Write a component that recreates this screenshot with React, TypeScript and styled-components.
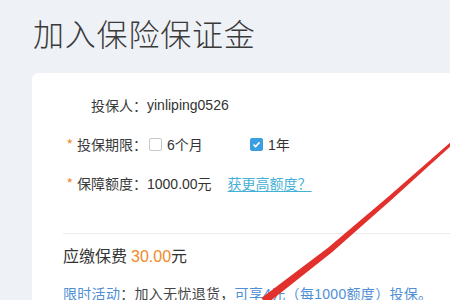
import styled, { createGlobalStyle } from "styled-components";

const GlobalStyle = createGlobalStyle`
  html, body {
    margin: 0;
    padding: 0;
    background: #eef1f5;
    font-family: "Liberation Sans", "Noto Sans CJK SC", sans-serif;
    color: #333;
    overflow: hidden;
  }
`;

const Page = styled.div`
  position: relative;
  width: 450px;
  height: 300px;
  overflow: hidden;
`;

const Title = styled.h1`
  margin: 0;
  padding: 13px 0 0 33px;
  height: 60px;
  font-family: "Noto Sans CJK SC", sans-serif;
  font-weight: 300;
  font-size: 31px;
  line-height: 40px;
  color: #3a3a3a;
  letter-spacing: 0.8px;
`;

const Card = styled.div`
  margin-left: 32px;
  background: #fff;
  border-radius: 6px 0 0 0;
  padding: 20px 0 0 31px;
  height: 300px;
`;

const Form = styled.div`
  display: flex;
  flex-direction: column;
  gap: 15px;
  padding-bottom: 38px;
  border-bottom: 1px solid #ececec;
`;

const Row = styled.div`
  display: flex;
  align-items: center;
  height: 24px;
  font-size: 14px;
`;

const Label = styled.div`
  width: 84px;
  text-align: right;
  font-family: "Noto Sans CJK SC", sans-serif;
  color: #3a3a3a;
  white-space: nowrap;
`;

const Star = styled.span`
  color: #f08a2a;
  margin-right: 4px;
`;

const Value = styled.div`
  display: flex;
  align-items: center;
  color: #333;
  white-space: nowrap;
`;

const Option = styled.label<{ $width?: number }>`
  display: flex;
  align-items: center;
  gap: 5px;
  width: ${(p) => (p.$width ? `${p.$width}px` : "auto")};
  margin-left: 2px;
`;

const Box = styled.span<{ $checked?: boolean }>`
  width: 11px;
  height: 11px;
  border-radius: 2px;
  border: 1px solid ${(p) => (p.$checked ? "#3a9fe0" : "#c8c8c8")};
  background: ${(p) => (p.$checked ? "#3a9fe0" : "#fff")};
  display: flex;
  align-items: center;
  justify-content: center;
`;

const MoreLink = styled.a`
  margin-left: 16px;
  color: #45b0d6;
  text-decoration: underline;
  text-underline-offset: 2px;
`;

const Fee = styled.div`
  margin-top: 12px;
  font-size: 16px;
  line-height: 22px;
  color: #333;
`;

const Amount = styled.span`
  color: #f08a2a;
  margin-left: 4px;
`;

const Promo = styled.div`
  margin-top: 16px;
  font-size: 14px;
  line-height: 20px;
  color: #444;
  white-space: nowrap;
  letter-spacing: 0.3px;
`;

const Blue = styled.span`
  color: #4f8fd6;
`;

const Arrow = styled.svg`
  position: absolute;
  left: 0;
  top: 0;
  pointer-events: none;
`;

const Check = () => (
  <svg width="9" height="9" viewBox="0 0 9 9">
    <path d="M1.5 4.6 L3.6 6.6 L7.5 2.4" fill="none" stroke="#fff" strokeWidth="1.6" />
  </svg>
);

export default function App() {
  return (
    <Page>
      <GlobalStyle />
      <Title>加入保险保证金</Title>
      <Card>
        <Form>
          <Row>
            <Label>投保人：</Label>
            <Value>yinliping0526</Value>
          </Row>
          <Row>
            <Label>
              <Star>*</Star>投保期限：
            </Label>
            <Value>
              <Option $width={99}>
                <Box />
                6个月
              </Option>
              <Option>
                <Box $checked>
                  <Check />
                </Box>
                1年
              </Option>
            </Value>
          </Row>
          <Row>
            <Label>
              <Star>*</Star>保障额度：
            </Label>
            <Value>
              1000.00元
              <MoreLink>获更高额度？</MoreLink>
            </Value>
          </Row>
        </Form>
        <Fee>
          应缴保费<Amount>30.00</Amount>元
        </Fee>
        <Promo>
          <Blue>限时活动</Blue>：加入无忧退货，<Blue>可享4元（每1000额度）投保。</Blue>
        </Promo>
      </Card>
      <Arrow width="450" height="300" viewBox="0 0 450 300">
        <path
          d="M451 141.9 L388.5 196.4 L328 247.8 L261.4 298 L266.6 304 L332 252.3 L391.5 199.7 L453 144.1 Z"
          fill="#e2302c"
        />
      </Arrow>
    </Page>
  );
}
